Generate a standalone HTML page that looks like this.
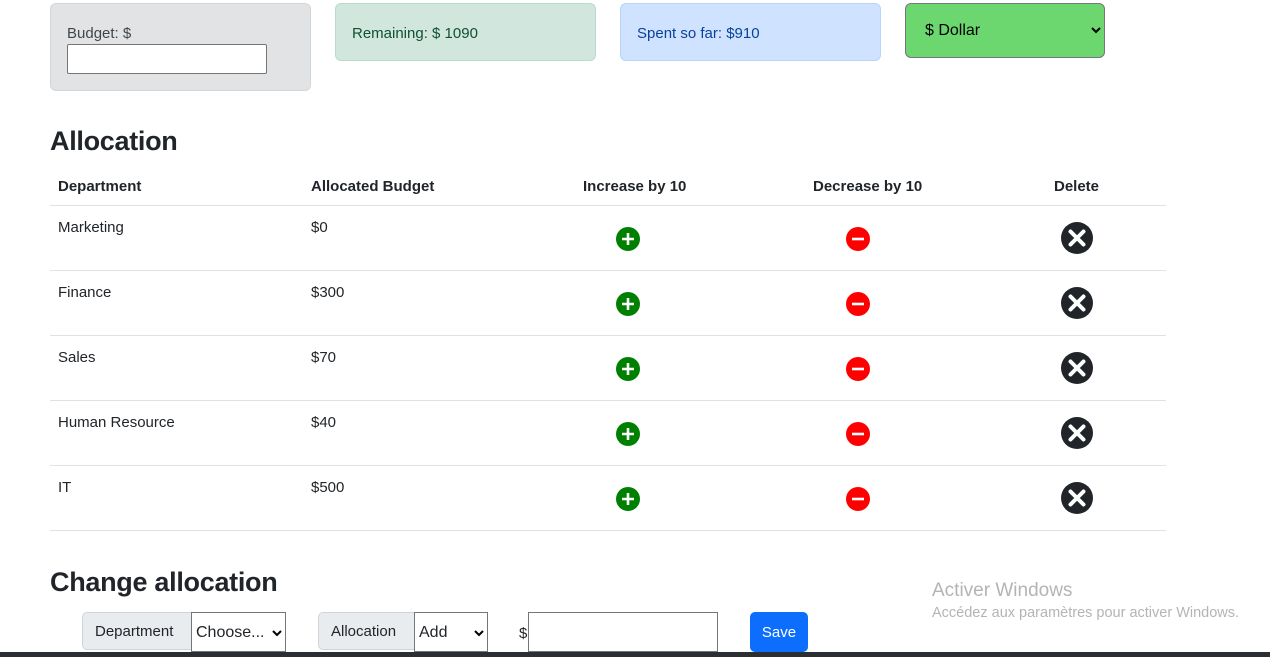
<!DOCTYPE html>
<html><head><meta charset="utf-8"><style>
*{box-sizing:border-box}
body{margin:0;width:1270px;height:657px;overflow:hidden;background:#fff;font-family:"Liberation Sans",sans-serif;color:#212529;font-size:15px;position:relative}
.a{position:absolute}
.box{position:absolute;border-radius:6px;border:1px solid}
h2{position:absolute;margin:0;font-size:27px;font-weight:bold;left:50px;letter-spacing:-0.3px}
.th{position:absolute;top:178px;font-weight:bold;font-size:15px}
.line{position:absolute;left:50px;width:1116px;height:1px;background:#dee2e6}
.cell{position:absolute;font-size:15px}
.ic{position:absolute}
.grp{position:absolute;background:#e9ecef;border:1px solid #ced4da;border-radius:5px 0 0 5px;height:38px;top:612px;padding:0 12px;line-height:38px;font-size:15px}
.sel{position:absolute;top:612px;height:40px;border:1px solid #767676;background:#fff;font-size:16px;line-height:40px;padding-left:4px}
</style></head><body>
<div class="box" style="left:50px;top:3px;width:261px;height:88px;background:#e2e3e5;border-color:#d3d6d8"></div>
<div class="a" style="left:67px;top:25px;color:#41464b">Budget: $</div>
<div class="a" style="left:67px;top:44px;width:200px;height:30px;background:#fff;border:1px solid #767676;border-radius:2px"></div>
<div class="box" style="left:335px;top:3px;width:261px;height:58px;background:#d1e7dd;border-color:#badbcc"></div>
<div class="a" style="left:352px;top:25px;color:#0f5132">Remaining: $ 1090</div>
<div class="box" style="left:620px;top:3px;width:261px;height:58px;background:#cfe2ff;border-color:#b6d4fe"></div>
<div class="a" style="left:637px;top:25px;color:#084298">Spent so far: $910</div>
<div class="box" style="left:905px;top:3px;width:200px;height:55px;background:#6cd66f;border-color:#777"></div>
<div class="a" style="left:925px;top:22px;font-size:16px;color:#000">$ Dollar</div>
<svg class="a" style="left:1091px;top:26px" width="10" height="8"><path d="M1 2l4 4 4-4" stroke="#000" stroke-width="2" fill="none"/></svg>

<h2 style="top:126px">Allocation</h2>
<div class="th" style="left:58px">Department</div>
<div class="th" style="left:311px">Allocated Budget</div>
<div class="th" style="left:583px">Increase by 10</div>
<div class="th" style="left:813px">Decrease by 10</div>
<div class="th" style="left:1054px">Delete</div>
<div class="line" style="top:205px"></div>

<div class="cell" style="left:58px;top:219px">Marketing</div><div class="cell" style="left:311px;top:219px">$0</div>
<div class="line" style="top:270px"></div>
<div class="cell" style="left:58px;top:284px">Finance</div><div class="cell" style="left:311px;top:284px">$300</div>
<div class="line" style="top:335px"></div>
<div class="cell" style="left:58px;top:349px">Sales</div><div class="cell" style="left:311px;top:349px">$70</div>
<div class="line" style="top:400px"></div>
<div class="cell" style="left:58px;top:414px">Human Resource</div><div class="cell" style="left:311px;top:414px">$40</div>
<div class="line" style="top:465px"></div>
<div class="cell" style="left:58px;top:479px">IT</div><div class="cell" style="left:311px;top:479px">$500</div>
<div class="line" style="top:530px"></div>

<svg class="a" style="left:0;top:0" width="1270" height="560">
<defs>
<g id="p"><circle r="12" fill="#008000"/><path d="M-6 0h12M0-6v12" stroke="#fff" stroke-width="2.6"/></g>
<g id="m"><circle r="12" fill="#f00"/><path d="M-6 0h12" stroke="#fff" stroke-width="2.6"/></g>
<g id="x"><circle r="16" fill="#212529"/><path d="M-6.5-6.5l13 13M6.5-6.5l-13 13" stroke="#fff" stroke-width="4" stroke-linecap="round"/></g>
</defs>
<use href="#p" x="628" y="239"/><use href="#m" x="858" y="239"/><use href="#x" x="1077" y="238"/>
<use href="#p" x="628" y="304"/><use href="#m" x="858" y="304"/><use href="#x" x="1077" y="303"/>
<use href="#p" x="628" y="369"/><use href="#m" x="858" y="369"/><use href="#x" x="1077" y="368"/>
<use href="#p" x="628" y="434"/><use href="#m" x="858" y="434"/><use href="#x" x="1077" y="433"/>
<use href="#p" x="628" y="499"/><use href="#m" x="858" y="499"/><use href="#x" x="1077" y="498"/>
</svg>

<h2 style="top:567px">Change allocation</h2>
<div class="grp" style="left:82px;width:110px">Department</div>
<div class="sel" style="left:191px;width:95px">Choose...</div>
<svg class="a" style="left:272px;top:629px" width="10" height="8"><path d="M1 2l4 4 4-4" stroke="#000" stroke-width="2" fill="none"/></svg>
<div class="grp" style="left:318px;width:97px">Allocation</div>
<div class="sel" style="left:414px;width:74px">Add</div>
<svg class="a" style="left:474px;top:629px" width="10" height="8"><path d="M1 2l4 4 4-4" stroke="#000" stroke-width="2" fill="none"/></svg>
<div class="a" style="left:519px;top:625px">$</div>
<div class="a" style="left:528px;top:612px;width:190px;height:40px;border:1px solid #767676;background:#fff"></div>
<div class="a" style="left:750px;top:612px;width:58px;height:40px;background:#0d6efd;border-radius:5px;color:#fff;text-align:center;line-height:42px">Save</div>

<div class="a" style="left:932px;top:580px;font-size:19px;color:#b4b4b4">Activer Windows</div>
<div class="a" style="left:932px;top:605px;font-size:14.5px;color:#b4b4b4">Accédez aux paramètres pour activer Windows.</div>
<div class="a" style="left:0;top:652px;width:1270px;height:5px;background:#2b2f33"></div>
</body></html>
